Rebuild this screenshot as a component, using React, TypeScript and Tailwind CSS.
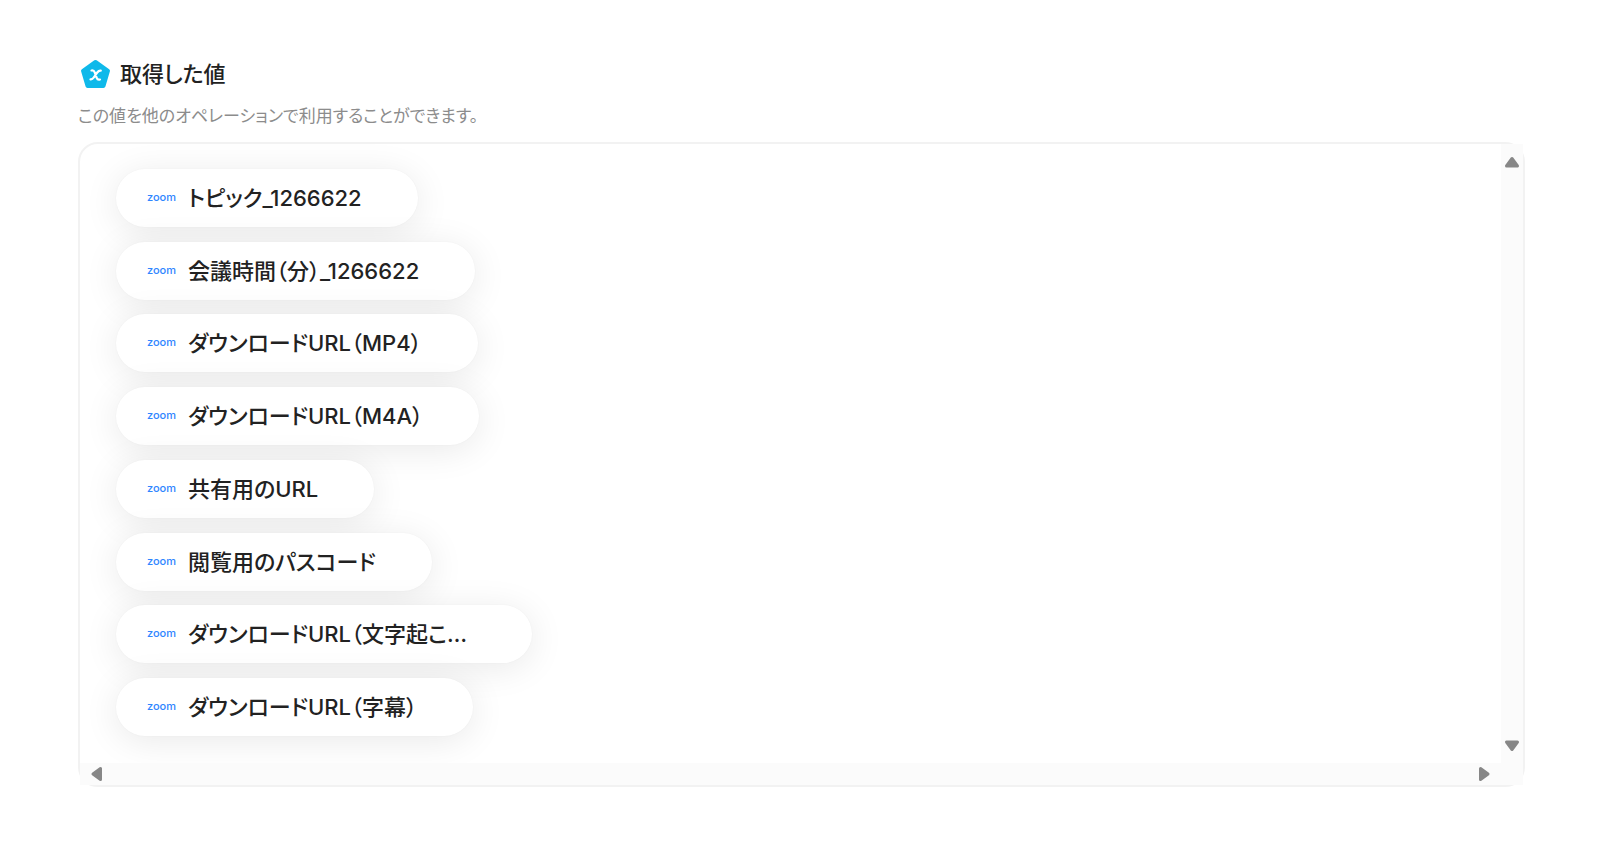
type Value = { label: string; width?: string };

const values: Value[] = [
  { label: "トピック_1266622" },
  { label: "会議時間（分）_1266622" },
  { label: "ダウンロードURL（MP4）" },
  { label: "ダウンロードURL（M4A）" },
  { label: "共有用のURL" },
  { label: "閲覧用のパスコード" },
  { label: "ダウンロードURL（文字起こ…", width: "w-[288px]" },
  { label: "ダウンロードURL（字幕）" },
];

function ValueIcon() {
  return (
    <svg aria-hidden="true" viewBox="0 0 32 32" className="size-8 shrink-0">
      <path
        d="M15.500 4 28 12.800 23.500 28H7.500L3 12.800Z"
        fill="#0fb9ea"
        stroke="#0fb9ea"
        strokeWidth="4"
        strokeLinejoin="round"
      />
      <path
        d="M11.500 12.500C13.300 12.100 14.200 12.900 14.700 14.300L16.700 19.900C17.200 21.300 18.200 22 20 21.500M20.800 12.600C19.300 12.300 18.300 13 17.200 14.500L13.700 19.500C12.700 21 11.800 21.700 10.500 21.400"
        fill="none"
        stroke="#fff"
        strokeWidth="2.200"
        strokeLinecap="round"
      />
    </svg>
  );
}

function Arrow({ d }: { d: string }) {
  return (
    <svg aria-hidden="true" viewBox="0 0 16 16" className="size-4">
      <path d={d} fill="#878787" stroke="#878787" strokeWidth="3" strokeLinejoin="round" />
    </svg>
  );
}

function ValuePill({ label, width }: Value) {
  return (
    <li className="flex">
      <button
        type="button"
        className="flex h-[58px] items-center rounded-full bg-white pr-14 pl-[31px] shadow-[0_5px_36px_rgba(0,0,0,0.09),0_0_2px_rgba(0,0,0,0.04)]"
      >
        <span className="w-[41px] pb-0.5 text-left font-['Inter',sans-serif] text-[11px] leading-4 font-medium text-[#2f86ff]">
          zoom
        </span>
        <span className={`text-left text-[22px] leading-8 font-medium whitespace-nowrap ${width ?? ""}`}>
          {label}
        </span>
      </button>
    </li>
  );
}

export default function App() {
  return (
    <main className="min-h-screen bg-white pt-[58px] pr-[75px] pb-14 pl-[78px] font-['Inter','Noto_Sans_CJK_JP',sans-serif] text-[#222] [font-feature-settings:'palt']">
      <header>
        <h1 className="flex items-center gap-2 pl-0.5 text-[22px] leading-8 font-medium">
          <ValueIcon />
          取得した値
        </h1>
        <p className="mt-3 text-[17px] leading-7 text-[#8c8c8c]">
          この値を他のオペレーションで利用することができます。
        </p>
      </header>
      <section className="mt-3 grid h-[645px] grid-cols-[1fr_22px] grid-rows-[1fr_22px] rounded-[20px] border-2 border-[#f2f2f2]">
        <ul className="flex flex-col justify-between pt-[25px] pb-[27px] pl-9">
          {values.map((value) => (
            <ValuePill key={value.label} {...value} />
          ))}
        </ul>
        <div className="flex flex-col items-center justify-between bg-[#fbfbfb] py-2.5">
          <button type="button" aria-label="上へスクロール">
            <Arrow d="M8 4.500 13.500 12H2.500Z" />
          </button>
          <button type="button" aria-label="下へスクロール">
            <Arrow d="M2.500 5H13.500L8 12.500Z" />
          </button>
        </div>
        <div className="flex items-center justify-between bg-[#fbfbfb] px-[9px]">
          <button type="button" aria-label="左へスクロール">
            <Arrow d="M4 8 11.500 2.500V13.500Z" />
          </button>
          <button type="button" aria-label="右へスクロール">
            <Arrow d="M4.500 2.500 12 8 4.500 13.500Z" />
          </button>
        </div>
        <div className="bg-[#fbfbfb]" />
      </section>
    </main>
  );
}
